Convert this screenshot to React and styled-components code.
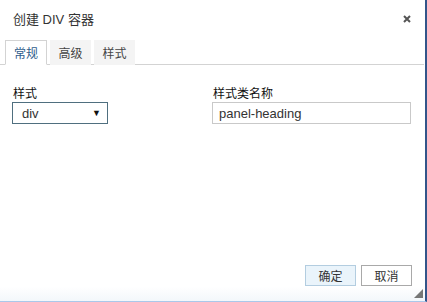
import React, { useState } from 'react';
import styled, { createGlobalStyle } from 'styled-components';

const GlobalStyle = createGlobalStyle`
  html, body {
    margin: 0;
    padding: 0;
    background: #ffffff;
  }
  * {
    box-sizing: border-box;
  }
`;

const FONT = `"Liberation Sans", Arial, "Noto Sans CJK SC", sans-serif`;

const tabs = ['常规', '高级', '样式'];

export default function App() {
  const [active, setActive] = useState(0);

  return (
    <>
      <GlobalStyle />
      <Dialog>
        <Header>
          <Title>创建 DIV 容器</Title>
          <Close>
            <svg width="8" height="8" viewBox="0 0 8 8">
              <path d="M1 1L7 7M7 1L1 7" stroke="#555" strokeWidth="2" />
            </svg>
          </Close>
        </Header>

        <TabBar>
          {tabs.map((t, i) => (
            <Tab key={t} active={i === active} onClick={() => setActive(i)}>
              {t}
            </Tab>
          ))}
        </TabBar>

        <Form>
          <Field>
            <Label>样式</Label>
            <Select>
              <span>div</span>
              <Arrow>▼</Arrow>
            </Select>
          </Field>
          <Field>
            <Label>样式类名称</Label>
            <Input defaultValue="panel-heading" />
          </Field>
        </Form>

        <Footer>
          <Button primary>确定</Button>
          <Button>取消</Button>
        </Footer>

        <Grip />
      </Dialog>
    </>
  );
}

const Dialog = styled.div`
  position: relative;
  width: 427px;
  height: 302px;
  display: flex;
  flex-direction: column;
  background: #ffffff;
  border-right: 2px solid #33558a;
  border-bottom: 1px solid #aac8ea;
  box-shadow: inset 0 -1px 0 #2c4b7c;
  font-family: ${FONT};
`;

const Header = styled.div`
  height: 36px;
  padding: 0 14px 0 13px;
  display: flex;
  align-items: center;
  justify-content: space-between;
`;

const Title = styled.div`
  font-size: 13px;
  color: #333333;
`;

const Close = styled.div`
  display: flex;
  padding-top: 1px;
`;

const TabBar = styled.div`
  margin-top: 4px;
  padding-left: 5px;
  display: flex;
  gap: 3px;
  border-bottom: 1px solid #d3d3d3;
  margin-right: 1px;
`;

const Tab = styled.div`
  height: 25px;
  width: ${(props) => (props.active ? '42px' : '41px')};
  margin-bottom: -1px;
  display: flex;
  align-items: center;
  justify-content: center;
  font-size: 12px;
  cursor: pointer;
  color: ${(props) => (props.active ? '#2f5d8c' : '#444444')};
  background: ${(props) => (props.active ? '#ffffff' : '#f4f4f4')};
  border: 1px solid ${(props) => (props.active ? '#d3d3d3' : 'transparent')};
  border-bottom-color: ${(props) => (props.active ? '#ffffff' : 'transparent')};
`;

const Form = styled.div`
  margin-top: 22px;
  padding: 0 14px 0 12px;
  display: grid;
  grid-template-columns: 200px 199px;
`;

const Field = styled.div`
  display: flex;
  flex-direction: column;
  align-items: flex-start;
`;

const Label = styled.div`
  font-size: 12px;
  line-height: 15px;
  color: #111111;
  padding-left: 1px;
`;

const Select = styled.div`
  width: 96px;
  height: 22px;
  border: 1px solid #4f6f7f;
  padding: 0 6px 0 9px;
  display: flex;
  align-items: center;
  justify-content: space-between;
  font-size: 13px;
  color: #333333;
`;

const Arrow = styled.span`
  font-size: 9px;
  color: #111111;
`;

const Input = styled.input`
  width: 199px;
  height: 22px;
  border: 1px solid #c9c9c9;
  padding: 0 6px;
  font-family: ${FONT};
  font-size: 13px;
  color: #333333;
  outline: none;
`;

const Footer = styled.div`
  margin-top: auto;
  padding: 0 13px 15px 0;
  display: flex;
  justify-content: flex-end;
  gap: 5px;
  background: linear-gradient(#ffffff 60%, #f3f7fb);
`;

const Button = styled.div`
  width: 51px;
  height: 21px;
  display: flex;
  align-items: center;
  justify-content: center;
  font-size: 12px;
  color: #333333;
  background: ${(props) => (props.primary ? '#eaf4fb' : '#ffffff')};
  border: 1px solid ${(props) => (props.primary ? '#b3cde0' : '#a9a9a9')};
`;

const Grip = styled.div`
  position: absolute;
  right: 2px;
  bottom: 3px;
  width: 0;
  height: 0;
  border-left: 9px solid transparent;
  border-bottom: 9px solid #777777;
`;
